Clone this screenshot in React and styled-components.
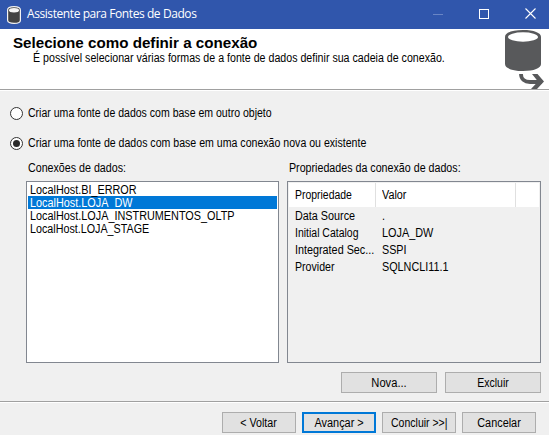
import React from "react";
import styled, { createGlobalStyle } from "styled-components";

const GlobalStyle = createGlobalStyle`
  *, *::before, *::after { box-sizing: border-box; }
  html, body { margin: 0; padding: 0; overflow: hidden; }
`;

const Window = styled.div`
  display: flex;
  flex-direction: column;
  width: 549px;
  height: 435px;
  overflow: hidden;
  background: #f0f0f0;
  color: #000;
  font: 12px/13px "Liberation Sans", Arial, sans-serif;
`;

const Label = styled.span`
  display: inline-block;
  vertical-align: top;
  white-space: pre;
  transform: scaleX(${(p) => p.$stretch ?? 0.89});
  transform-origin: ${(p) => (p.$centered ? "center" : "left")};
`;

const TitleBar = styled.header`
  display: flex;
  align-items: center;
  flex: 0 0 29px;
  padding-left: 7px;
  background: #3056ac;
  color: #fff;
`;

const Title = styled.span`
  flex: 1;
  margin: -1px 0 0 6px;
  font: 12px/16px "Open Sans", "Noto Sans", sans-serif;
  letter-spacing: -0.42px;
  white-space: nowrap;
`;

const WindowControls = styled.div`
  display: grid;
  grid-template-columns: repeat(3, 46px);
  justify-items: center;
  align-items: center;
  height: 27px;
  margin: -2px -4px 0 0;
`;

const Header = styled.section`
  display: flex;
  justify-content: space-between;
  flex: 0 0 60px;
  background: #fff;
`;

const HeaderText = styled.div`
  display: flex;
  flex-direction: column;
  padding: 7px 0 0 13px;
`;

const Heading = styled.h1`
  margin: 0;
  font: bold 14px/15px "Liberation Sans", Arial, sans-serif;
  white-space: nowrap;
`;

const Description = styled.p`
  margin: 1px 0 0 20px;
`;

const Divider = styled.div`
  flex: 0 0 2px;
  background: #fff;
  border-top: 1px solid #a0a0a0;
`;

const Body = styled.main`
  display: flex;
  flex-direction: column;
  flex: 0 0 310px;
  padding: 15px 8px 0 10px;
`;

const RadioOption = styled.div`
  display: flex;
  align-items: center;
  gap: 5px;
  height: 14px;
  margin-bottom: 16px;
`;

const RadioCircle = styled.span`
  display: flex;
  align-items: center;
  justify-content: center;
  width: 13px;
  height: 13px;
  border: 1px solid #333;
  border-radius: 50%;
  background: #fff;
`;

const RadioDot = styled.span`
  width: 7px;
  height: 7px;
  border-radius: 50%;
  background: #2b2b2b;
`;

const Panels = styled.div`
  display: grid;
  grid-template-columns: 253px 254px;
  column-gap: 8px;
  margin: -5px 0 0 16px;
`;

const PanelTitle = styled.div`
  height: 20px;
  padding: 1px 0 0 2px;
`;

const ConnectionList = styled.ul`
  height: 182px;
  margin: 0;
  padding: 1px;
  border: 1px solid #828790;
  background: #fff;
  list-style: none;
`;

const Connection = styled.li`
  height: 13px;
  padding: 1px 0 0 2px;
  background: ${(p) => (p.$selected ? "#0078d7" : "transparent")};
  color: ${(p) => (p.$selected ? "#fff" : "#000")};
`;

const PropertyTable = styled.div`
  height: 182px;
  padding: 1px;
  border: 1px solid #828790;
`;

const TableHead = styled.div`
  display: grid;
  grid-template-columns: 87px 140px 1fr;
  height: 24px;
  margin-bottom: 1px;
  background: #fff;
`;

const HeadCell = styled.div`
  display: flex;
  align-items: center;
  padding-left: 6px;
  border-right: ${(p) => (p.$last ? "0" : "1px solid #e0e0e0")};
`;

const PropertyRow = styled.div`
  display: grid;
  grid-template-columns: 87px 1fr;
  align-items: center;
  justify-items: start;
  height: 17px;
  padding-left: 6px;
`;

const Actions = styled.div`
  display: flex;
  justify-content: flex-end;
  gap: 8px;
  margin-top: 9px;
`;

const Footer = styled.footer`
  display: flex;
  justify-content: flex-end;
  gap: 6px;
  padding: 9px 13px 0 0;
`;

const Button = styled.button`
  display: flex;
  align-items: center;
  justify-content: center;
  width: ${(p) => (p.$wide ? 96 : 74)}px;
  height: 21px;
  padding: ${(p) => (p.$wide ? "2px 0 0" : "1px 0 0")};
  border: ${(p) => (p.$primary ? "2px solid #0078d7" : "1px solid #adadad")};
  background: #e1e1e1;
  color: #000;
  font: inherit;
`;

const connections = [
  ["LocalHost.BI_ERROR", 0.903],
  ["LocalHost.LOJA_DW", 0.904],
  ["LocalHost.LOJA_INSTRUMENTOS_OLTP", 0.904],
  ["LocalHost.LOJA_STAGE", 0.895],
];

const properties = [
  ["Data Source", 0.9, ".", 0.9],
  ["Initial Catalog", 0.873, "LOJA_DW", 0.905],
  ["Integrated Sec...", 0.9, "SSPI", 0.897],
  ["Provider", 0.883, "SQLNCLI11.1", 0.9],
];

function SmallDatabaseIcon() {
  return (
    <svg width="14" height="18" viewBox="0 0 14 18">
      <path d="M.6 4C.6 1.800 3 .7 7 .7s6.400 1.100 6.400 3.300v10.200c0 2-2.400 3.200-6.400 3.200S.6 16.200.6 14.200Z" fill="#424242" stroke="#f4f4f4" strokeWidth="1.200" />
      <ellipse cx="7" cy="4.300" rx="5" ry="2.200" fill="#f4f4f4" />
    </svg>
  );
}

function DatabaseArrowIcon() {
  return (
    <svg width="46" height="60" viewBox="0 0 46 60">
      <path d="M2 8C2 3.700 9 1 20 1s18 2.700 18 7v27c0 4.200-7 7-18 7S2 39.200 2 35Z" fill="#58595b" />
      <ellipse cx="20" cy="8" rx="15" ry="4.700" fill="#fff" />
      <path d="M18 45c0 5 3.500 8 9 8h12" fill="none" stroke="#58595b" strokeWidth="3.800" />
      <path d="M29 45h5.500l6.500 7.500L34 60h-6l7-7.500Z" fill="#58595b" />
    </svg>
  );
}

export default function App() {
  return (
    <>
      <GlobalStyle />
      <Window>
        <TitleBar>
          <SmallDatabaseIcon />
          <Title>Assistente para Fontes de Dados</Title>
          <WindowControls>
            <svg width="11" height="11"><path d="M0 6.500h10" stroke="#6985c5" /></svg>
            <svg width="10" height="10"><rect x=".5" y=".5" width="9" height="9" fill="none" stroke="#fff" /></svg>
            <svg width="11" height="11"><path d="m.5.5 10 10m0-10-10 10" stroke="#fff" strokeWidth="1.100" /></svg>
          </WindowControls>
        </TitleBar>
        <Header>
          <HeaderText>
            <Heading><Label $stretch={1.083}>Selecione como definir a conexão</Label></Heading>
            <Description>
              <Label $stretch={0.887}>É possível selecionar várias formas de a fonte de dados definir sua cadeia de conexão.</Label>
            </Description>
          </HeaderText>
          <DatabaseArrowIcon />
        </Header>
        <Divider />
        <Body>
          <RadioOption>
            <RadioCircle />
            <Label $stretch={0.878}>Criar uma fonte de dados com base em outro objeto</Label>
          </RadioOption>
          <RadioOption>
            <RadioCircle><RadioDot /></RadioCircle>
            <Label $stretch={0.882}>Criar uma fonte de dados com base em uma conexão nova ou existente</Label>
          </RadioOption>
          <Panels>
            <PanelTitle><Label>Conexões de dados:</Label></PanelTitle>
            <PanelTitle><Label>Propriedades da conexão de dados:</Label></PanelTitle>
            <ConnectionList>
              {connections.map(([name, stretch], i) => (
                <Connection key={name} $selected={i === 1}><Label $stretch={stretch}>{name}</Label></Connection>
              ))}
            </ConnectionList>
            <PropertyTable>
              <TableHead>
                <HeadCell><Label $stretch={0.87}>Propriedade</Label></HeadCell>
                <HeadCell><Label $stretch={0.9}>Valor</Label></HeadCell>
                <HeadCell $last />
              </TableHead>
              {properties.map(([name, nameStretch, value, valueStretch]) => (
                <PropertyRow key={name}>
                  <Label $stretch={nameStretch}>{name}</Label>
                  <Label $stretch={valueStretch}>{value}</Label>
                </PropertyRow>
              ))}
            </PropertyTable>
          </Panels>
          <Actions>
            <Button $wide><Label $centered $stretch={0.93}>Nova...</Label></Button>
            <Button $wide><Label $centered $stretch={0.875}>Excluir</Label></Button>
          </Actions>
        </Body>
        <Divider />
        <Footer>
          <Button><Label $centered>{"< Voltar"}</Label></Button>
          <Button $primary><Label $centered $stretch={0.91}>{"Avançar >"}</Label></Button>
          <Button><Label $centered $stretch={0.875}>{"Concluir >>|"}</Label></Button>
          <Button><Label $centered $stretch={0.905}>Cancelar</Label></Button>
        </Footer>
      </Window>
    </>
  );
}
